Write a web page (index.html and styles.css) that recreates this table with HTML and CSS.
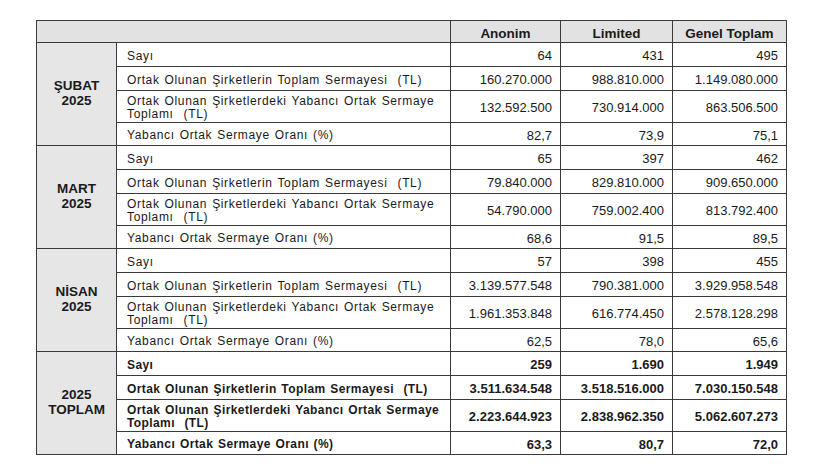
FILE: index.html
```html
<!DOCTYPE html>
<html lang="tr">
<head>
<meta charset="utf-8">
<link rel="stylesheet" href="styles.css">
</head>
<body>
<table class="t">
  <colgroup>
    <col class="c-grp"><col class="c-lbl"><col class="c-a"><col class="c-l"><col class="c-g">
  </colgroup>
  <thead>
    <tr class="hdr">
      <th colspan="2"></th>
      <th>Anonim</th>
      <th>Limited</th>
      <th>Genel Toplam</th>
    </tr>
  </thead>
  <tbody>
    <tr class="r1"><td class="grp" rowspan="4">ŞUBAT<br>2025</td><td class="lbl">Sayı</td><td class="num">64</td><td class="num">431</td><td class="num">495</td></tr>
    <tr class="r2"><td class="lbl">Ortak Olunan Şirketlerin Toplam Sermayesi &nbsp;(TL)</td><td class="num">160.270.000</td><td class="num">988.810.000</td><td class="num">1.149.080.000</td></tr>
    <tr class="r3"><td class="lbl two">Ortak Olunan Şirketlerdeki Yabancı Ortak Sermaye Toplamı &nbsp;(TL)</td><td class="num">132.592.500</td><td class="num">730.914.000</td><td class="num">863.506.500</td></tr>
    <tr class="r4"><td class="lbl">Yabancı Ortak Sermaye Oranı (%)</td><td class="num">82,7</td><td class="num">73,9</td><td class="num">75,1</td></tr>

    <tr class="r1"><td class="grp" rowspan="4">MART<br>2025</td><td class="lbl">Sayı</td><td class="num">65</td><td class="num">397</td><td class="num">462</td></tr>
    <tr class="r2"><td class="lbl">Ortak Olunan Şirketlerin Toplam Sermayesi &nbsp;(TL)</td><td class="num">79.840.000</td><td class="num">829.810.000</td><td class="num">909.650.000</td></tr>
    <tr class="r3"><td class="lbl two">Ortak Olunan Şirketlerdeki Yabancı Ortak Sermaye Toplamı &nbsp;(TL)</td><td class="num">54.790.000</td><td class="num">759.002.400</td><td class="num">813.792.400</td></tr>
    <tr class="r4"><td class="lbl">Yabancı Ortak Sermaye Oranı (%)</td><td class="num">68,6</td><td class="num">91,5</td><td class="num">89,5</td></tr>

    <tr class="r1"><td class="grp" rowspan="4">NİSAN<br>2025</td><td class="lbl">Sayı</td><td class="num">57</td><td class="num">398</td><td class="num">455</td></tr>
    <tr class="r2"><td class="lbl">Ortak Olunan Şirketlerin Toplam Sermayesi &nbsp;(TL)</td><td class="num">3.139.577.548</td><td class="num">790.381.000</td><td class="num">3.929.958.548</td></tr>
    <tr class="r3"><td class="lbl two">Ortak Olunan Şirketlerdeki Yabancı Ortak Sermaye Toplamı &nbsp;(TL)</td><td class="num">1.961.353.848</td><td class="num">616.774.450</td><td class="num">2.578.128.298</td></tr>
    <tr class="r4"><td class="lbl">Yabancı Ortak Sermaye Oranı (%)</td><td class="num">62,5</td><td class="num">78,0</td><td class="num">65,6</td></tr>

    <tr class="r1 total"><td class="grp" rowspan="4">2025<br>TOPLAM</td><td class="lbl">Sayı</td><td class="num">259</td><td class="num">1.690</td><td class="num">1.949</td></tr>
    <tr class="r2 total"><td class="lbl">Ortak Olunan Şirketlerin Toplam Sermayesi &nbsp;(TL)</td><td class="num">3.511.634.548</td><td class="num">3.518.516.000</td><td class="num">7.030.150.548</td></tr>
    <tr class="r3 total"><td class="lbl two">Ortak Olunan Şirketlerdeki Yabancı Ortak Sermaye Toplamı &nbsp;(TL)</td><td class="num">2.223.644.923</td><td class="num">2.838.962.350</td><td class="num">5.062.607.273</td></tr>
    <tr class="r4 total"><td class="lbl">Yabancı Ortak Sermaye Oranı (%)</td><td class="num">63,3</td><td class="num">80,7</td><td class="num">72,0</td></tr>
  </tbody>
</table>
</body>
</html>
```

FILE: styles.css
```css
html, body {
  margin: 0;
  padding: 0;
  background: #ffffff;
}
body {
  padding: 20px 0 0 36px;
  font-family: "Liberation Sans", Arial, sans-serif;
  color: #1a1a1a;
}
.t {
  border-collapse: collapse;
  border: 1px solid #333;
}
.c-grp { width: 80px; }
.c-lbl { width: 333px; }
.c-a { width: 110px; }
.c-l { width: 112px; }
.c-g { width: 114px; }

.t th, .t td {
  border: 1px solid #3a3a3a;
  padding: 0;
  white-space: nowrap;
}
.hdr { height: 22px; }
.t .hdr th {
  background: #e2e2e2;
  font-size: 13.5px;
  font-weight: bold;
  text-align: center;
  vertical-align: bottom;
  padding-bottom: 0;
  line-height: 16px;
}
.r1 { height: 24px; }
.r2 { height: 24px; }
.r3 { height: 32px; }
.r4 { height: 23px; }

.t td.grp {
  background: #e6e6e6;
  text-align: center;
  font-weight: bold;
  font-size: 13.5px;
  line-height: 15px;
  padding-bottom: 2px;
}
.t td.lbl {
  font-size: 12px;
  letter-spacing: 0.65px;
  word-spacing: 1px;
  padding: 2px 0 0 10px;
  vertical-align: middle;
}
.t td.lbl.two {
  white-space: normal;
  line-height: 13px;
  padding: 2px 6px 0 10px;
  width: 317px;
}
.t td.num {
  font-size: 13px;
  text-align: right;
  padding: 2px 8px 0 0;
  vertical-align: middle;
}
.t .total td { font-weight: bold; }
.t .total td.lbl { letter-spacing: 0.4px; }
```
